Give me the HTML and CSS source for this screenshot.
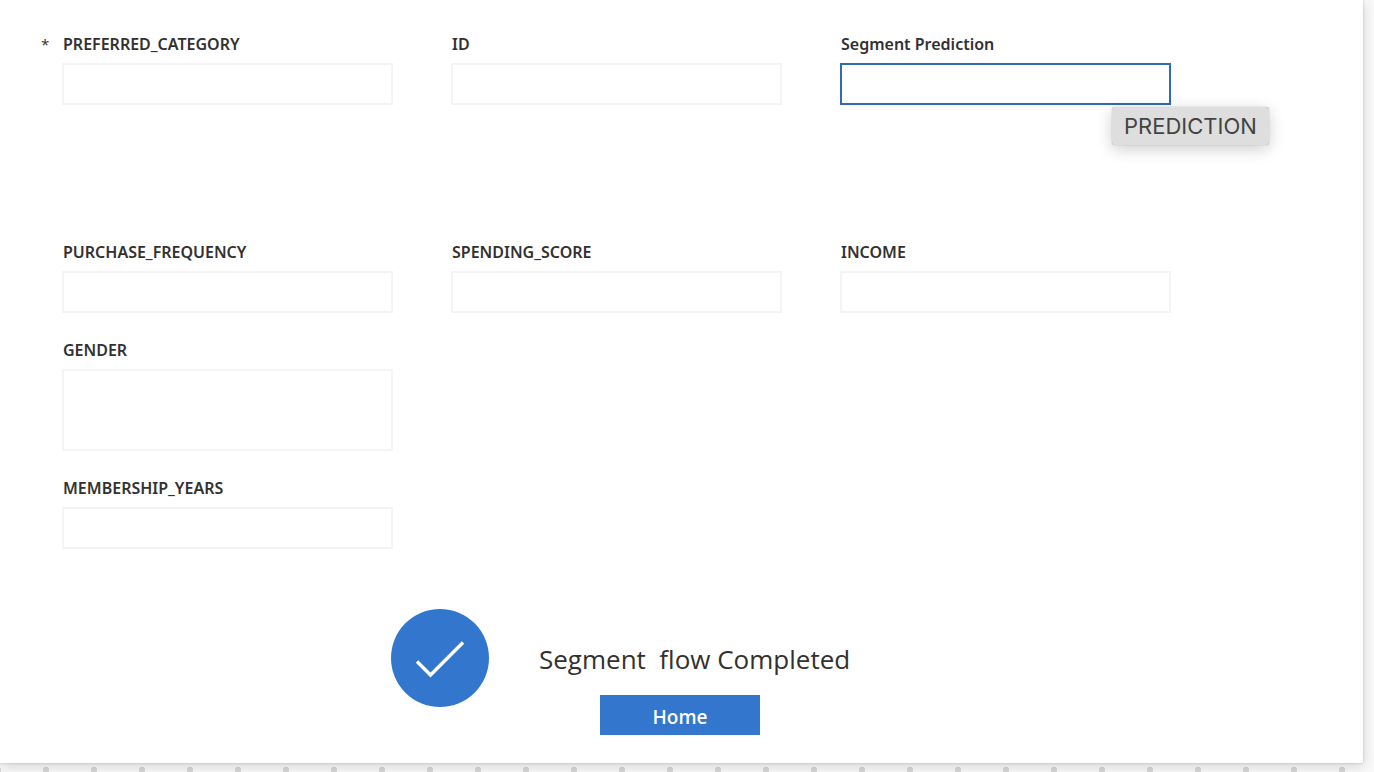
FILE: index.html
```html
<!DOCTYPE html>
<html lang="en">
<head>
<meta charset="utf-8">
<meta name="viewport" content="width=device-width, initial-scale=1">
<title>Segment Prediction</title>
<link rel="stylesheet" href="styles.css">
</head>
<body>
<main class="screen">
  <form class="form">
    <div class="field field-tall field-required">
      <label class="label" for="category">PREFERRED_CATEGORY</label>
      <input class="input" id="category" type="text" required>
    </div>
    <div class="field">
      <label class="label" for="record-id">ID</label>
      <input class="input" id="record-id" type="text">
    </div>
    <div class="field">
      <label class="label" for="prediction">Segment Prediction</label>
      <div class="control">
        <input class="input input-active" id="prediction" type="text" aria-describedby="prediction-tip">
        <span class="tooltip" id="prediction-tip" role="tooltip">PREDICTION</span>
      </div>
    </div>
    <div class="field">
      <label class="label" for="frequency">PURCHASE_FREQUENCY</label>
      <input class="input" id="frequency" type="text">
    </div>
    <div class="field">
      <label class="label" for="score">SPENDING_SCORE</label>
      <input class="input" id="score" type="text">
    </div>
    <div class="field">
      <label class="label" for="income">INCOME</label>
      <input class="input" id="income" type="text">
    </div>
    <div class="field field-first">
      <label class="label" for="gender">GENDER</label>
      <textarea class="input input-multiline" id="gender"></textarea>
    </div>
    <div class="field field-first">
      <label class="label" for="years">MEMBERSHIP_YEARS</label>
      <input class="input" id="years" type="text">
    </div>
  </form>
  <section class="status">
    <svg class="status-icon" viewBox="0 0 98 98" aria-hidden="true">
      <circle cx="49" cy="49" r="49" fill="#3276ce"/>
      <path d="M26 52.500L39.500 66L72 33.500" fill="none" stroke="#fff" stroke-width="3.400"/>
    </svg>
    <div class="status-body">
      <p class="status-text">Segment  flow Completed</p>
      <button class="home" type="button">Home</button>
    </div>
  </section>
</main>
</body>
</html>
```
FILE: styles.css
```css
* {
  box-sizing: border-box;
}

body {
  margin: 0;
  min-height: 100vh;
  padding: 0 11px 9px 0;
  background-color: #f9f9f9;
  background-image: radial-gradient(circle, #d8d8d8 3px, transparent 3px);
  background-size: 48px 48px;
  background-position: 22px 26px;
  color: #323130;
  font-family: "Segoe UI", "Open Sans", "Noto Sans", sans-serif;
}

.screen {
  padding: 32px 0 28px;
  background: #fff;
  box-shadow: 0 0 2px rgba(0, 0, 0, 0.2), 0 3px 12px rgba(0, 0, 0, 0.16);
}

.form {
  display: grid;
  grid-template-columns: repeat(3, 1fr);
  gap: 25px 58px;
  padding: 0 192px 0 62px;
}

.field {
  position: relative;
  display: flex;
  flex-direction: column;
  gap: 7px;
}

.field-tall {
  min-height: 183px;
}

.field-first {
  grid-column: 1;
}

.field-required::before {
  content: "*";
  position: absolute;
  left: -21px;
  font-size: 15px;
  line-height: 24px;
}

.label {
  padding-left: 1px;
  font-family: "Segoe UI", "Noto Sans", sans-serif;
  font-size: 16px;
  font-weight: 600;
  line-height: 24px;
}

.control {
  position: relative;
}

.input {
  display: block;
  width: 100%;
  height: 42px;
  padding: 0 10px;
  border: 2px solid #f4f4f4;
  border-radius: 0;
  outline: none;
  background: #fff;
  color: inherit;
  font: inherit;
  font-size: 16px;
}

.input-active,
.input:focus {
  border-color: #2e6cb7;
}

.input-multiline {
  height: 82px;
  padding: 8px 10px;
  resize: none;
}

.tooltip {
  position: absolute;
  top: 44px;
  left: calc(100% - 59px);
  padding: 0 12px;
  border-radius: 3px;
  background: #dedede;
  box-shadow: 0 0 1px rgba(0, 0, 0, 0.4), 0 4px 16px rgba(0, 0, 0, 0.2);
  color: #444;
  font-family: Inter, sans-serif;
  font-size: 22px;
  line-height: 38px;
  white-space: nowrap;
}

.status {
  display: flex;
  gap: 50px;
  padding: 60px 24px 0 391px;
}

.status-icon {
  flex: none;
  width: 98px;
  height: 98px;
}

.status-body {
  display: flex;
  flex-direction: column;
  align-items: flex-start;
  gap: 20px;
  padding-top: 34px;
}

.status-text {
  margin: 0;
  font-size: 26px;
  line-height: 32px;
  white-space: pre;
}

.home {
  width: 160px;
  height: 40px;
  margin-left: 61px;
  padding: 3px 0 0;
  border: 0;
  background: #3276ce;
  color: #fff;
  font-family: inherit;
  font-size: 19px;
  font-weight: 600;
  cursor: pointer;
}
```
